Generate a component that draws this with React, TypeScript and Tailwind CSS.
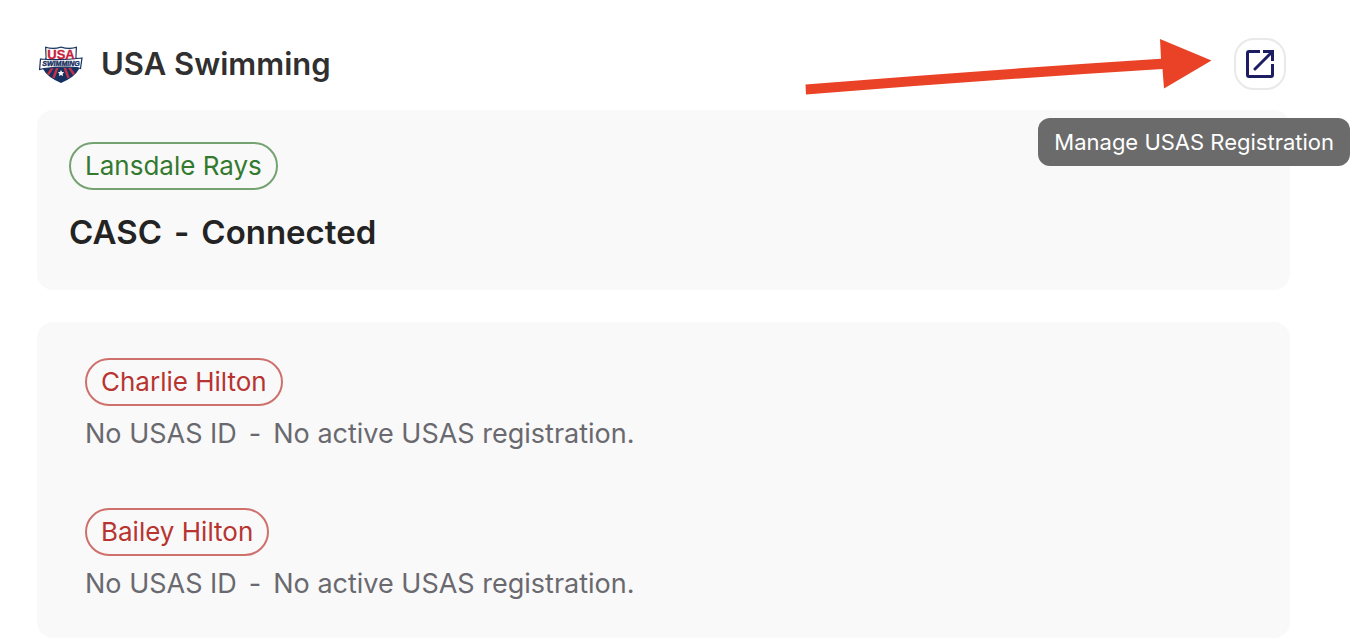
import React from "react";
import clsx from "clsx";

interface Member {
  name: string;
  usasId: string;
  status: string;
}

const members: Member[] = [
  { name: "Charlie Hilton", usasId: "No USAS ID", status: "No active USAS registration." },
  { name: "Bailey Hilton", usasId: "No USAS ID", status: "No active USAS registration." },
];

// ── Icons ──────────────────────────────────────────────────────────────────────
function SwimmingLogo() {
  return (
    <svg
      viewBox="0 0 44 38"
      className="h-[38px] w-11 shrink-0 font-['Liberation_Sans_Narrow','Liberation_Sans',sans-serif]"
      role="img"
      aria-label="USA Swimming logo"
    >
      {/* shield */}
      <path d="M6 1.500 Q14 4 22 1.500 Q30 4 38 1.500 L37.500 12 L40 24 Q36 32 22 38 Q8 32 4 24 L6.500 12 Z" fill="#16305f" />
      <path d="M7.300 3 Q14.500 5 22 2.700 Q29.500 5 36.700 3 L36.300 16 H7.700 Z" fill="#fff" />
      {/* stripes and star */}
      <g stroke="#c3304a" strokeWidth="2.400">
        <path d="M14 22 L9 29.500" />
        <path d="M18.500 22 L14.500 33" />
        <path d="M25.500 22 L29.500 33" />
        <path d="M30 22 L35 29.500" />
      </g>
      <path d="M22 25 l1 1.900 2.200.3 -1.600 1.500 .4 2.200 -2 -1 -2 1 .4 -2.200 -1.600 -1.500 2.200 -.3 Z" fill="#fff" />
      {/* banner */}
      <path d="M1.500 14 Q22 15.500 43 13 L41.500 23.500 L38 22.500 Q22 21.500 5 23.500 L.6 24.500 Z" fill="#fff" stroke="#16305f" strokeWidth="1.200" />
      <text x="22" y="13.500" textAnchor="middle" fontSize="13" fontWeight="700" fill="#c8203c" stroke="#c8203c" strokeWidth=".3">USA</text>
      <text x="22" y="21" textAnchor="middle" fontSize="7" fontWeight="700" fontStyle="italic" fill="#16305f" stroke="#16305f" strokeWidth=".4">SWIMMING</text>
    </svg>
  );
}

function OpenIcon() {
  return (
    <svg viewBox="0 0 28 28" className="size-7" fill="none" stroke="#1d1e62" strokeWidth="3" aria-hidden="true">
      <path d="M14 1.500 H3 Q1.500 1.500 1.500 3 V25 Q1.500 26.500 3 26.500 H25 Q26.500 26.500 26.500 25 V14" />
      <path d="M17 1.500 H26.500 V11" />
      <path d="M26 2 L9 19" strokeLinecap="round" />
    </svg>
  );
}

function Arrow() {
  return (
    <svg viewBox="0 0 406 52" className="h-[52px] w-[406px] shrink-0 overflow-visible" fill="#ea4226" aria-hidden="true">
      <path d="M1.500 46.500 Q181 32 357 20.800 L356 1 L407.500 22.500 L360 50.500 L358.500 31 Q181 42 2 56.500 Z" />
    </svg>
  );
}

// ── Building blocks ────────────────────────────────────────────────────────────
function Pill({ children, active = false }: { children: React.ReactNode; active?: boolean }) {
  return (
    <span
      className={clsx(
        "flex h-12 w-fit items-center rounded-full border-2 px-[14px] pb-[2px] text-[26px]",
        active ? "border-[#74a371] text-[#33792f]" : "border-[#ce716c] text-[#b73431]"
      )}
    >
      {children}
    </span>
  );
}

export default function App() {
  return (
    <main className="min-h-screen bg-white pt-[38px] pr-[60px] pb-[2px] pl-[37px] font-['Inter',sans-serif]">
      <header className="flex items-center justify-between pr-1 pl-[2px]">
        <div className="flex items-center gap-[18px]">
          <SwimmingLogo />
          <h1 className="text-[31px] leading-10 font-semibold text-[#303031]">USA Swimming</h1>
        </div>
        <div className="flex items-center gap-6">
          <Arrow />
          <div className="relative">
            <button
              type="button"
              aria-describedby="manage-tip"
              aria-label="Open"
              className="flex size-[52px] items-center justify-center rounded-[20px] border-2 border-[#e9e9e9] bg-white"
            >
              <OpenIcon />
            </button>
            <div
              id="manage-tip"
              role="tooltip"
              className="absolute top-20 -right-16 flex h-12 items-center rounded-xl bg-[#6b6b6b] px-4 text-[22px] whitespace-nowrap text-white"
            >
              Manage USAS Registration
            </div>
          </div>
        </div>
      </header>

      <section className="mt-5 rounded-2xl bg-[#f9f9f9] px-8 pt-8 pb-9">
        <Pill active>Lansdale Rays</Pill>
        <h2 className="mt-5 flex gap-3 text-[33px] leading-11 font-semibold text-[#232323]">
          <span>CASC</span>
          <span>-</span>
          <span>Connected</span>
        </h2>
      </section>

      <ul className="mt-8 flex flex-col gap-[54px] rounded-2xl bg-[#f9f9f9] px-12 pt-9 pb-[34px]">
        {members.map((m) => (
          <li key={m.name} className="flex flex-col gap-2">
            <Pill>{m.name}</Pill>
            <p className="flex gap-3 text-[27px] leading-10 text-[#69696f]">
              <span>{m.usasId}</span>
              <span>-</span>
              <span>{m.status}</span>
            </p>
          </li>
        ))}
      </ul>
    </main>
  );
}
